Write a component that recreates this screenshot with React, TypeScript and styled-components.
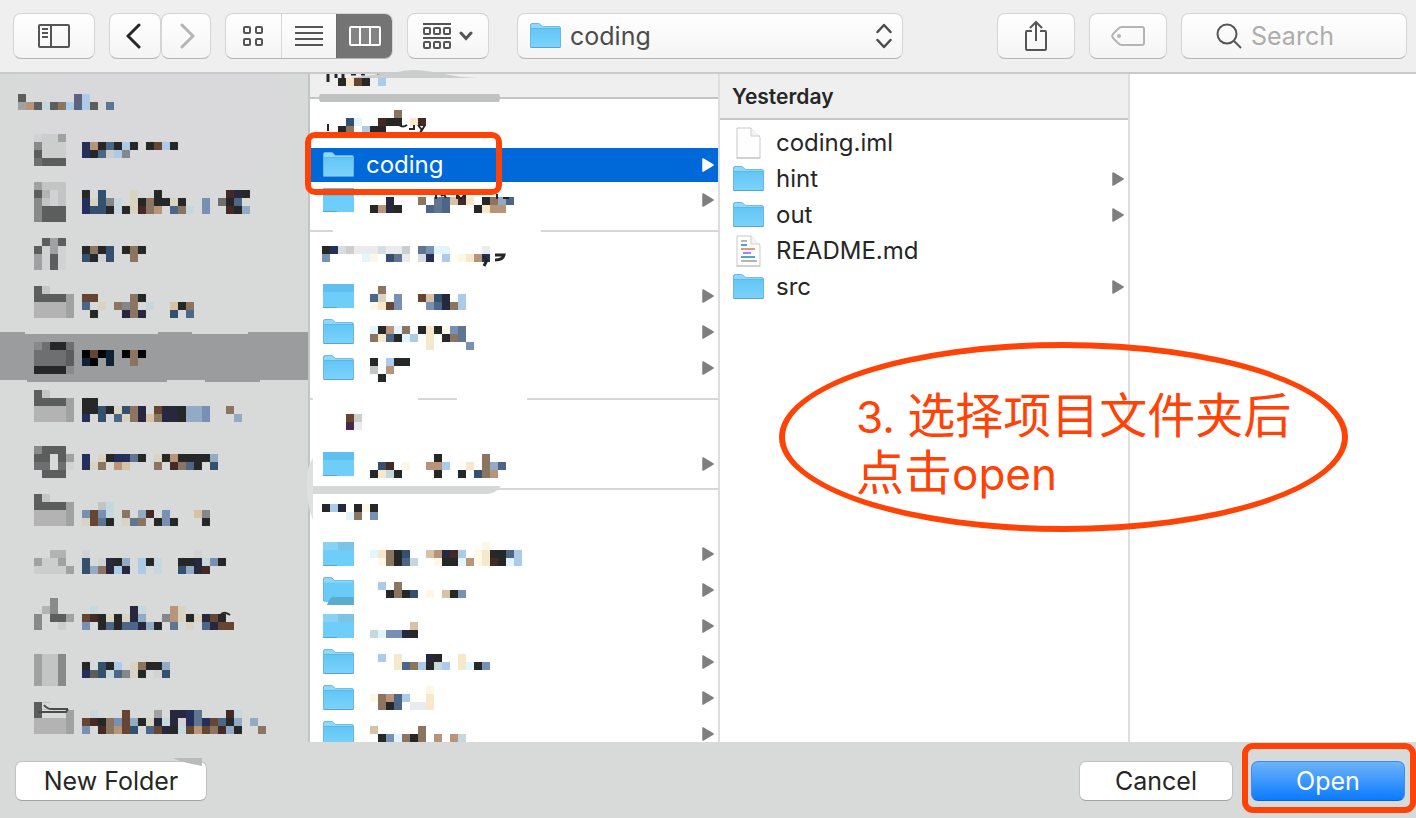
import React from "react";
import styled, { createGlobalStyle, css } from "styled-components";

const GlobalStyle = createGlobalStyle`
  *, *::before, *::after { box-sizing: border-box; }
  body {
    margin: 0;
    background: #efefef;
    font-family: Inter, "Noto Sans CJK SC", sans-serif;
    color: #262626;
  }
  button, input, select { font: inherit; color: inherit; margin: 0; }
  ul { list-style: none; margin: 0; padding: 0; }
`;

const MARK = "#ff4206";

/* ---------- page frame ---------- */

const Dialog = styled.div`
  display: grid;
  grid-template-rows: auto minmax(0, 1fr) auto;
  height: 100vh;
`;

const Toolbar = styled.header`
  display: flex;
  align-items: center;
  gap: 14px;
  padding: 13px 9px 13px 13px;
  background: #efefef;
  border-bottom: 2px solid #cacaca;
`;

const raised = css`
  height: 46px;
  border: 1px solid #d4d4d4;
  border-bottom: 1px solid #b4b4b4;
  border-radius: 8px;
  background: linear-gradient(#fefefe, #fafafa 50%, #f4f4f4);
`;

const ToolButton = styled.button<{ $w: number; $dark?: boolean }>`
  ${raised}
  width: ${(p) => p.$w}px;
  display: flex;
  align-items: center;
  justify-content: center;
  gap: 8px;
  padding: 0;
  color: ${(p) => (p.$dark ? "#262626" : "#555")};
  &:disabled { color: #b4b4b4; }
`;

const Pair = styled.div`
  display: flex;
  width: 102px;
`;

const Segments = styled.div`
  ${raised}
  display: flex;
  width: 168px;
  overflow: hidden;
`;

const Segment = styled.button<{ $on?: boolean }>`
  flex: 1;
  border: 0;
  border-left: 1px solid ${(p) => (p.$on ? "#6a6a6a" : "#d8d8d8")};
  padding: 0;
  display: flex;
  align-items: center;
  justify-content: center;
  background: ${(p) => (p.$on ? "#747474" : "transparent")};
  color: ${(p) => (p.$on ? "#fff" : "#555")};
  &:first-child { border-left: 0; }
`;

const PathBox = styled.label`
  ${raised}
  display: flex;
  align-items: center;
  gap: 9px;
  width: 386px;
  margin-left: 14px;
  padding: 0 10px 0 12px;
  color: #4c4c4c;
`;

const PathSelect = styled.select`
  flex: 1;
  min-width: 0;
  appearance: none;
  border: 0;
  padding: 0;
  background: transparent;
  font-size: 25px;
  line-height: 32px;
`;

const RightTools = styled.div`
  display: flex;
  gap: 14px;
  margin-left: auto;
`;

const SearchBox = styled.label`
  ${raised}
  display: flex;
  align-items: center;
  gap: 9px;
  width: 226px;
  padding: 0 12px 0 34px;
  color: #555;
`;

const SearchInput = styled.input`
  flex: 1;
  min-width: 0;
  border: 0;
  padding: 0;
  background: transparent;
  font-size: 25px;
  line-height: 32px;
  &::placeholder { color: #adadad; opacity: 1; }
`;

const Body = styled.main`
  position: relative;
  display: flex;
  min-height: 0;
  background: #fff;
`;

const Footer = styled.footer`
  display: flex;
  align-items: center;
  gap: 18px;
  padding: 19px 11px 17px 15px;
  background: #d8dad9;
  position: relative;
`;

const PushButton = styled.button<{ $w: number; $primary?: boolean }>`
  width: ${(p) => p.$w}px;
  height: 40px;
  padding: 0;
  font-size: 25px;
  line-height: 36px;
  border-radius: 7px;
  border: 1px solid ${(p) => (p.$primary ? "#3d8ef0" : "#c2c2c2")};
  border-bottom-color: ${(p) => (p.$primary ? "#0b63d8" : "#a3a3a3")};
  color: ${(p) => (p.$primary ? "#fff" : "#262626")};
  background: ${(p) => (p.$primary ? "linear-gradient(#6bb4fa, #3d97fb 50%, #0a7aff)" : "#fff")};
`;

const Spacer = styled.div`
  flex: 1;
`;

const Ringed = styled.div`
  position: relative;
`;

const OpenRing = styled.span`
  position: absolute;
  inset: -18px -11px -12px -9px;
  border: 6px solid ${MARK};
  border-radius: 11px;
  pointer-events: none;
`;

const ButtonSmear = styled.svg`
  position: absolute;
  left: 172px;
  top: 16px;
`;

const HeaderSmear = styled.svg`
  position: absolute;
  left: 320px;
  top: -4px;
`;

/* ---------- pixelated names ---------- */

const PALETTE: Record<string, string> = {
  K: "#020203", B: "#0f2338", k: "#262827", n: "#25305a", N: "#27283e", b: "#34506e", s: "#4c6688",
  c: "#5f7590", p: "#7890b4", l: "#93aac4", L: "#abcbe8", i: "#c6d8de", w: "#e2f5fd",
  m: "#8b7460", M: "#664632", t: "#b8947a", T: "#d8c2a6", y: "#f7e8cc", Y: "#fdf8e6",
  e: "#d9d4c2", r: "#452926", q: "#5c6280", v: "#452a4e", g: "#85888a",
  "0": "#5c5e5d", "1": "#6e6f70", "2": "#888a89", "3": "#a0a1a1", "4": "#b3b3b3",
  "5": "#c3c4c4", "6": "#cccdcd", "7": "#d2d2d5", "8": "#ebebed", "9": "#d8dde2",
};

const CELL = 8;

const Block = styled.svg`
  display: block;
  flex: none;
`;

function Mosaic({ rows }: { rows: string[] }) {
  const cols = Math.max(...rows.map((r) => r.length));
  return (
    <Block width={cols * CELL} height={rows.length * CELL} shapeRendering="crispEdges" aria-hidden="true">
      {rows.flatMap((row, y) =>
        [...row].map((ch, x) =>
          PALETTE[ch] ? (
            <rect key={`${x}-${y}`} x={x * CELL} y={y * CELL} width={CELL} height={CELL} fill={PALETTE[ch]} />
          ) : null,
        ),
      )}
    </Block>
  );
}

/* ---------- sidebar ---------- */

const Sidebar = styled.nav`
  position: relative;
  flex: none;
  width: 310px;
  overflow: hidden;
  border-right: 2px solid #c3c5c4;
  background: radial-gradient(ellipse 160px 110px at 160px 40px, #d9d8db 60%, #d8dad9);
`;

const SidebarHeading = styled.div`
  height: 50px;
  padding: 20px 18px 0;
`;

const Place = styled.li<{ $on?: boolean }>`
  height: 52px;
  padding: 10px 0 0 34px;
  background: ${(p) => (p.$on ? "linear-gradient(#9b9c9d 48px, transparent 48px)" : "none")};
  &:nth-child(even) { padding-top: 6px; }
`;

const PLACES: string[][] = [
  ["7663", "2666..ntkskLk.kMLk", "0666..nks6Lg", "1000"],
  ["3555", "0475..k.b...e..k........rNk", "2575..nebgi.ekmkkek..p.1ks", "2000..nbbkikermt.smi.p..rkl", "2000"],
  [".030", "0737..kmkb.kmk", "3707..bk7b..m", "3707"],
  ["05", "00003.MM....mk", "44443.s.e.mgm.i..Tkm", "44443..k...NmN...b.s"],
  ["21kk1", "11110.KMKB.KmK", "11110.BK.B..m", "kkkk2"],
  ["05", "00003.kk", "44443.kkbkebmN.MNNkllp..m", "44443.n.b.semNTmNNkllp...l"],
  ["2000", "00.03.n.eknnck.ektkkkkl", "11.17.nem.tT...m.rmsk.b", ".000"],
  ["05", "00003...5i", "44443.pMpi.m.lr.p...Tg", "44443.eMck.ecm.kpk...k"],
  ["..44..7.............7", "3663..b.7Nkl.Lki..kkNipk", "66663.blmNLN.L.i..blNr"],
  ["..2", ".42....i....Ni...te", "2.003.MrkekeNl..gtekeNMk", "2..6..p.kskssNlk.c.e.sNMM"],
  ["3552", "3552..k.bkL.emkkl", "3552..n0bisgek.7b", "3552"],
  ["05", "0...3..i...M...3.NNnc...ri", "44443.MrkmpMlkeNiN7ncnMskl.l", "44443.p.rmtMb.sMNkiMtMmrlk..m"],
];

/* ---------- browser columns ---------- */

const Column = styled.section<{ $grow?: boolean }>`
  flex: ${(p) => (p.$grow ? "1 1 0" : "none")};
  width: ${(p) => (p.$grow ? "auto" : "410px")};
  border-right: ${(p) => (p.$grow ? "0" : "2px solid #dedede")};
`;

const ColumnHead = styled.h2<{ $short?: boolean }>`
  margin: 0;
  height: ${(p) => (p.$short ? 25 : 46)}px;
  padding: ${(p) => (p.$short ? "4px 28px 0" : "8px 12px 0")};
  background: #efefef;
  border-bottom: 2px solid #c4c6c5;
  font-size: 21px;
  line-height: 30px;
  font-weight: 600;
`;

const Clip = styled.div`
  height: 100%;
  overflow: hidden;
  margin-left: -5px;
  padding-left: 5px;
  position: relative;
`;

const Group = styled.div<{ $tight?: boolean }>`
  border-bottom: 2px solid #d7d7d7;
  padding-bottom: ${(p) => (p.$tight ? 6 : 12)}px;
`;

const GroupHead = styled.div<{ $tall?: boolean }>`
  height: ${(p) => (p.$tall ? 49 : 46)}px;
  padding: ${(p) => (p.$tall ? 11 : 14)}px 12px 0;
`;

const FileRow = styled.button<{ $on?: boolean }>`
  position: relative;
  width: 100%;
  height: ${(p) => (p.$on ? 34 : 36)}px;
  display: flex;
  align-items: center;
  border: 0;
  padding: 0 4px 0 13px;
  text-align: left;
  font-size: 24px;
  line-height: 32px;
  background: ${(p) => (p.$on ? "#0069d9" : "transparent")};
  color: ${(p) => (p.$on ? "#fff" : "#262626")};
`;

const IconSlot = styled.span`
  display: flex;
  justify-content: center;
  flex: none;
  width: 31px;
  margin-right: 12px;
`;

const Name = styled.span`
  flex: 1;
`;

const HiddenName = styled.span<{ $top: number }>`
  flex: 1;
  align-self: flex-start;
  padding: ${(p) => p.$top}px 0 0 4px;
`;

const FileList = styled.div`
  padding-top: 5px;
`;

const CodingRing = styled.span`
  position: absolute;
  left: -5px;
  top: -16px;
  width: 197px;
  height: 63px;
  border: 6px solid ${MARK};
  border-radius: 10px;
  z-index: 2;
  pointer-events: none;
`;

const Smear = styled.svg`
  position: absolute;
  left: 0;
  top: 0;
  pointer-events: none;
`;

const Callout = styled.p`
  position: absolute;
  left: 779px;
  top: 268px;
  width: 569px;
  height: 190px;
  margin: 0;
  padding: 40px 0 0 71px;
  border: 6px solid ${MARK};
  border-radius: 50%;
  color: ${MARK};
  font-size: 48px;
  line-height: 55px;
  white-space: nowrap;
`;

const Latin = styled.span`
  font-size: 44px;
`;

/* ---------- icons ---------- */

const FolderIcon = () => (
  <svg width="31" height="26" viewBox="0 0 31 26" aria-hidden="true">
    <defs>
      <linearGradient id="folder-front" x1="0" y1="0" x2="0" y2="1">
        <stop offset="0" stopColor="#63c6f6" />
        <stop offset="1" stopColor="#7ad2fb" />
      </linearGradient>
    </defs>
    <path d="M.5 24V2q0-1.500 1.500-1.500h6.500q1 0 1.700.8l1.500 1.700q.6.600 1.500.600H29q1.500 0 1.500 1.500V24z" fill="#8fd8fc" stroke="#69b9df" />
    <path d="M1 5.500H30V24H1z" fill="url(#folder-front)" />
    <path d="M1 5.500H30" stroke="#5cb9e6" />
    <path d="M.5 24.500H30.500" stroke="#58a6cb" />
  </svg>
);

const SmearedFolder = ({ light }: { light?: boolean }) => (
  <svg width="31" height="26" viewBox="0 0 31 26" aria-hidden="true">
    <rect y="1" width="31" height="24" fill="#6fcdfa" />
    <rect y="1" width="31" height="8" fill={light ? "#7cc3e6" : "#5fc0ef"} />
    {light && <path d="M0 1h15v8H0z" fill="#86d3f6" />}
    <path d="M0 24.500H14" stroke="#58a6cb" />
  </svg>
);

const ShadedFolder = () => (
  <svg width="31" height="26" viewBox="0 0 31 26" overflow="visible" aria-hidden="true">
    <path d="M.5 24V2q0-1.500 1.500-1.500h6.500l3.200 3.100H30.500V24z" fill="#8fd8fc" stroke="#69b9df" />
    <path d="M1 5.500H31V25H1z" fill="#6bcbf8" />
    <path d="M9 20h22v8H4q2-6 5-8z" fill="#5cacce" />
  </svg>
);

const PageIcon = ({ code }: { code?: boolean }) => (
  <svg width="25" height="32" viewBox="0 0 25 32" aria-hidden="true">
    <path d="M1 1h14l9 9v21H1z" fill="#fefefe" stroke="#c9c9c9" />
    <path d="M15 1v8h9" fill="#f4f4f4" stroke="#cfcfcf" />
    <path d="M.5 31h24" stroke="#bdbdbd" />
    {code && (
      <g strokeWidth="2">
        <path d="M5 6h6M5 26h16" stroke="#b5b5b5" />
        <path d="M5 10h6M5 22h14" stroke="#4fa6c6" />
        <path d="M5 14h14" stroke="#e8938c" />
        <path d="M7 18h8" stroke="#a982f5" />
      </g>
    )}
  </svg>
);

const Triangle = ({ fill = "#7f7f7f" }: { fill?: string }) => (
  <svg width="12" height="14" viewBox="0 0 12 14" aria-hidden="true">
    <path d="M1 1 11 7 1 13z" fill={fill} stroke={fill} strokeWidth="1.500" strokeLinejoin="round" />
  </svg>
);

const stroke = { fill: "none", stroke: "currentColor", strokeWidth: 2, "aria-hidden": true } as const;

const SidebarIcon = () => (
  <svg width="32" height="24" {...stroke}>
    <rect x="1" y="1" width="30" height="22" rx="1" />
    <path d="M13 1v22M4 5h6M4 9h6M4 13h6" />
  </svg>
);

const Chevron = ({ flip }: { flip?: boolean }) => (
  <svg width="18" height="26" {...stroke} strokeWidth={3} strokeLinecap="round">
    <path d={flip ? "M5 2 16 13 5 24" : "M13 2 2 13 13 24"} />
  </svg>
);

const GridIcon = () => (
  <svg width="20" height="20" {...stroke}>
    {[1, 13].map((y) => [1, 13].map((x) => <rect key={`${x}-${y}`} x={x} y={y} width="6" height="6" rx="1" />))}
  </svg>
);

const ListIcon = () => (
  <svg width="28" height="20" {...stroke}>
    <path d="M0 1h28M0 7h28M0 13h28M0 19h28" />
  </svg>
);

const ColumnsIcon = () => (
  <svg width="32" height="20" {...stroke}>
    <rect x="1" y="1" width="30" height="18" rx="1" fill="#848484" />
    <path d="M11 1v18M21 1v18" />
  </svg>
);

const ArrangeIcon = () => (
  <svg width="28" height="26" {...stroke}>
    <path d="M0 1h28M0 15h28" />
    {[5, 19].map((y) => [1, 11, 21].map((x) => <rect key={`${x}-${y}`} x={x} y={y} width="6" height="6" rx="1" />))}
  </svg>
);

const DownIcon = () => (
  <svg width="14" height="10" {...stroke} strokeWidth={3} strokeLinecap="round">
    <path d="M2 2 7 7.500 12 2" />
  </svg>
);

const UpDownIcon = () => (
  <svg width="16" height="26" {...stroke} strokeWidth={2.5} strokeLinecap="round" strokeLinejoin="round">
    <path d="M1.500 9 8 2 14.500 9M1.500 17 8 24 14.500 17" />
  </svg>
);

const ShareIcon = () => (
  <svg width="24" height="32" {...stroke}>
    <path d="M8 11H3q-1 0-1 1v17q0 1 1 1h18q1 0 1-1V12q0-1-1-1h-5M12 21V2M6 8 12 2 18 8" />
  </svg>
);

const TagIcon = () => (
  <svg width="34" height="20" {...stroke}>
    <path d="M11 1H31q2 0 2 2V17q0 2-2 2H11q-2 0-3.500-1.500L2 12q-1.500-2 0-4L7.500 2.500Q9 1 11 1z" />
    <circle cx="8" cy="10" r="2" fill="currentColor" stroke="none" />
  </svg>
);

const SearchIcon = () => (
  <svg width="26" height="26" {...stroke}>
    <circle cx="11" cy="11" r="9.500" />
    <path d="M17.500 17.500 25 25" />
  </svg>
);

/* ---------- data ---------- */

type HiddenFolder = { icon?: "smeared" | "light" | "shaded"; top: number; art: string[] };

const RECENT: HiddenFolder[] = [
  { icon: "smeared", top: 8, art: [".m", "se.p..MTbN.L", "YyMp...psNmL"] },
  { top: 12, art: ["wktwm.kykYpc", "myskwL.y.kmc", ".......y....p"] },
  { top: 8, art: ["k.Lkk", "5.t", ".k"] },
];

const OLDER: HiddenFolder[] = [
  { icon: "smeared", top: 8, art: ["........k.....m", ".br.Y..ttL..y.mls", "kyik....k..k.bmt"] },
];

const OLDEST: HiddenFolder[] = [
  { icon: "light", top: 6, art: ["..............Y", "wymkb..TtNrL.YykksL", ".Ymksi..YkkwtYyrkwL"] },
  { icon: "shaded", top: 10, art: [".L.m", "..kmkb.Y.Tkp"] },
  { icon: "light", top: 14, art: [".....T", "iwppNk"] },
  { top: 10, art: [".L.y...Nk..y", "...ysmLkiL.ywkp"] },
  { top: 6, art: [".......Y", "YmtsL..y", ".mks.88y"] },
  { top: 10, art: ["T.....m", ".kpwmkm.t.ti"] },
];

const FILES: { name: string; kind: "folder" | "page" | "code" }[] = [
  { name: "coding.iml", kind: "page" },
  { name: "hint", kind: "folder" },
  { name: "out", kind: "folder" },
  { name: "README.md", kind: "code" },
  { name: "src", kind: "folder" },
];

function HiddenRow({ item }: { item: HiddenFolder }) {
  return (
    <FileRow type="button">
      <IconSlot>
        {item.icon === "shaded" ? (
          <ShadedFolder />
        ) : item.icon ? (
          <SmearedFolder light={item.icon === "light"} />
        ) : (
          <FolderIcon />
        )}
      </IconSlot>
      <HiddenName $top={item.top}>
        <Mosaic rows={item.art} />
      </HiddenName>
      <Triangle />
    </FileRow>
  );
}

/* ---------- page ---------- */

export default function App() {
  return (
    <Dialog>
      <GlobalStyle />
      <Toolbar>
        <ToolButton type="button" $w={82} aria-label="Toggle sidebar"><SidebarIcon /></ToolButton>
        <Pair>
          <ToolButton type="button" $w={52} $dark aria-label="Back"><Chevron /></ToolButton>
          <ToolButton type="button" $w={50} aria-label="Forward" disabled><Chevron flip /></ToolButton>
        </Pair>
        <Segments>
          <Segment type="button" aria-label="Icons"><GridIcon /></Segment>
          <Segment type="button" aria-label="List"><ListIcon /></Segment>
          <Segment type="button" aria-label="Columns" aria-pressed="true" $on><ColumnsIcon /></Segment>
        </Segments>
        <ToolButton type="button" $w={82} aria-label="Arrange"><ArrangeIcon /><DownIcon /></ToolButton>
        <PathBox>
          <FolderIcon />
          <PathSelect aria-label="Current folder" defaultValue="coding">
            <option value="coding">coding</option>
          </PathSelect>
          <UpDownIcon />
        </PathBox>
        <RightTools>
          <ToolButton type="button" $w={78} aria-label="Share"><ShareIcon /></ToolButton>
          <ToolButton type="button" $w={78} aria-label="Tags" disabled><TagIcon /></ToolButton>
          <SearchBox>
            <SearchIcon />
            <SearchInput type="text" placeholder="Search" aria-label="Search" />
          </SearchBox>
        </RightTools>
      </Toolbar>

      <Body>
        <Sidebar aria-label="Places">
          <SidebarHeading>
            <Mosaic rows={["0......qL", "3t0i0mLqL0.c"]} />
          </SidebarHeading>
          <ul>
            {PLACES.map((art, i) => (
              <Place key={i} $on={i === 4}>
                <Mosaic rows={art} />
              </Place>
            ))}
          </ul>
          <Smear width="308" height="668" aria-hidden="true">
            <path d="M25 258h133v2H25zM192 258h56v2h-56z" fill="#d8dad9" />
            <path d="M27 306h140v2H27zM205 306h55v2h-55z" fill="#9b9c9d" />
            <path d="M221 540q4-3 9 1" fill="none" stroke="#262827" strokeWidth="2" />
            <path d="M42 629h24v6H42z" fill="#d8dad9" />
            <path d="M44 631q3 4 8 4h16M38 638h28l2-3" fill="none" stroke="#4a4c4b" strokeWidth="2" />
          </Smear>
        </Sidebar>

        <Column>
          <Clip>
            <ColumnHead $short>
              <Mosaic rows={["kyMk.L"]} />
            </ColumnHead>
            <Group>
              <GroupHead $tall>
                <Mosaic rows={[".........m", "...bw..rkk.yr", "..km.Lkk"]} />
              </GroupHead>
              <FileRow type="button" $on>
                <IconSlot><FolderIcon /></IconSlot>
                <Name>coding</Name>
                <Triangle fill="#fff" />
                <CodingRing />
              </FileRow>
              <HiddenRow item={{ icon: "smeared", top: 15, art: ["..N...m.csTry.kmls", "ktNk...scs...kytt"] }} />
            </Group>
            <Group>
              <GroupHead>
                <Mosaic rows={["kn968889886.cpww....8", "p....wY.bc8.9n.L.Yytn"]} />
              </GroupHead>
              {RECENT.map((item, i) => <HiddenRow key={i} item={item} />)}
            </Group>
            <Group $tight>
              <GroupHead>
                <Mosaic rows={["...M6", "...v8"]} />
              </GroupHead>
              {OLDER.map((item, i) => <HiddenRow key={i} item={item} />)}
            </Group>
            <GroupHead>
              <Mosaic rows={["kLN.kYk", "...wm.p"]} />
            </GroupHead>
            {OLDEST.map((item, i) => <HiddenRow key={i} item={item} />)}
            <Smear width="410" height="480" aria-hidden="true">
              <path d="M15 20h179q2 4 0 8H15q-2-4 0-8z" fill="#c0c2c1" />
              <g stroke="#262626" strokeWidth="3" fill="none">
                <path d="M23 0v8M31 0v4M38 0v4M46 0h5M56 0h4M72 0h8" />
                <path d="M23 50v7M94 51q4 3 8 0M104 55h5v-4M113 51l4 5 3-5M117 55l-3 6" strokeWidth="2" />
                <path d="M131 120v5M136 122q3-3 5 2M152 125v-5l4 5 4-5v5M192 120v5M198 124h6" strokeWidth="2" />
                <path d="M178 182l4 4-3 6M190 181h9q-1 5-9 5" />
              </g>
              <path d="M28 154h208v4H28zM8 323h105v4H8zM152 323h70v4h-70z" fill="#fff" />
              <path d="M0 412h196q-6 8-14 8H0z" fill="#d6d8d7" />
              <path d="M8 384v62q-5-12-6-26-2-25 6-36z" fill="#dedfdf" />
            </Smear>
          </Clip>
        </Column>

        <Column>
          <ColumnHead>Yesterday</ColumnHead>
          <FileList>
            {FILES.map((f) => (
              <FileRow type="button" key={f.name}>
                <IconSlot>{f.kind === "folder" ? <FolderIcon /> : <PageIcon code={f.kind === "code"} />}</IconSlot>
                <Name>{f.name}</Name>
                {f.kind === "folder" && <Triangle />}
              </FileRow>
            ))}
          </FileList>
        </Column>
        <Column $grow />

        <HeaderSmear width="160" height="10" aria-hidden="true">
          <path d="M78 2q14-4 35 0l28 5 18 1H30q20-3 48-6z" fill="#cbcdcc" />
        </HeaderSmear>
        <Callout>
          <Latin>3. </Latin>选择项目文件夹后<br />点击<Latin>open</Latin>
        </Callout>
      </Body>

      <Footer>
        <PushButton type="button" $w={192}>New Folder</PushButton>
        <ButtonSmear width="36" height="9" aria-hidden="true">
          <path d="M1 0h29v8Q12 5 1 0z" fill="#b9bbba" />
        </ButtonSmear>
        <Spacer />
        <PushButton type="button" $w={154}>Cancel</PushButton>
        <Ringed>
          <PushButton type="button" $w={154} $primary>Open</PushButton>
          <OpenRing />
        </Ringed>
      </Footer>
    </Dialog>
  );
}
